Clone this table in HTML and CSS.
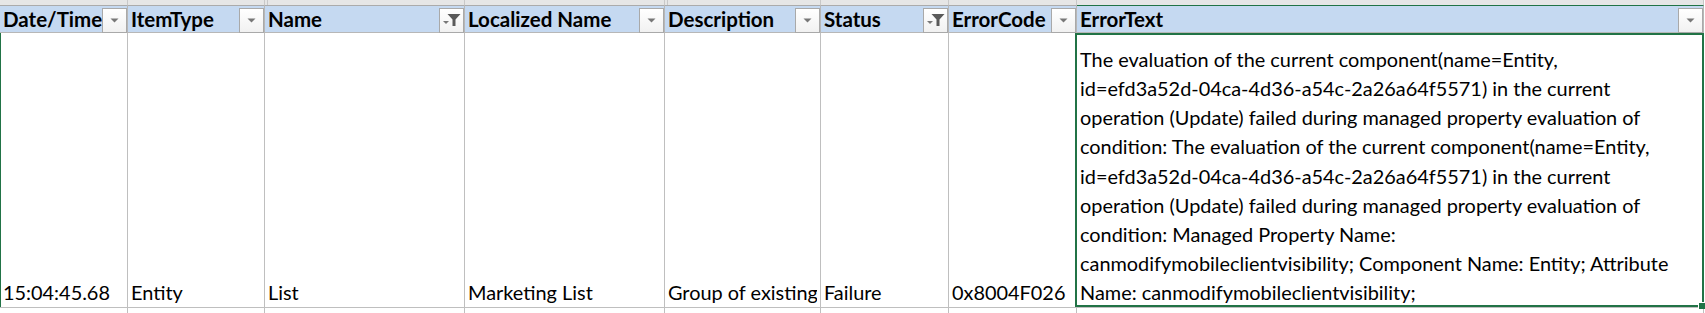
FILE: index.html
```html
<!DOCTYPE html>
<html lang="en">
<head>
<meta charset="utf-8">
<title>Sheet</title>
<link rel="stylesheet" href="styles.css">
</head>
<body>
<div class="sheet">
  <div class="ch"></div>
  <div class="ch"></div>
  <div class="ch ch-hid"></div>
  <div class="ch"></div>
  <div class="ch ch-hid"></div>
  <div class="ch"></div>
  <div class="ch"></div>
  <div class="ch ch-sel"></div>

  <div class="hd"><span class="hd-label">Date/Time</span><span class="dd"><svg viewBox="0 0 23 23" width="23" height="23"><path class="tri" d="M7.5 9.5H15.5L11.5 13.5Z"/></svg></span></div>
  <div class="hd"><span class="hd-label">ItemType</span><span class="dd"><svg viewBox="0 0 23 23" width="23" height="23"><path class="tri" d="M7.5 9.5H15.5L11.5 13.5Z"/></svg></span></div>
  <div class="hd"><span class="hd-label">Name</span><span class="dd"><svg viewBox="0 0 23 23" width="23" height="23"><path class="funnel" d="M7.5 5H20.5L15.5 10.5V17H12.5V10.5Z"/><path class="tri" d="M3 12H9L6 15Z"/></svg></span></div>
  <div class="hd"><span class="hd-label">Localized Name</span><span class="dd"><svg viewBox="0 0 23 23" width="23" height="23"><path class="tri" d="M7.5 9.5H15.5L11.5 13.5Z"/></svg></span></div>
  <div class="hd"><span class="hd-label">Description</span><span class="dd"><svg viewBox="0 0 23 23" width="23" height="23"><path class="tri" d="M7.5 9.5H15.5L11.5 13.5Z"/></svg></span></div>
  <div class="hd"><span class="hd-label">Status</span><span class="dd"><svg viewBox="0 0 23 23" width="23" height="23"><path class="funnel" d="M7.5 5H20.5L15.5 10.5V17H12.5V10.5Z"/><path class="tri" d="M3 12H9L6 15Z"/></svg></span></div>
  <div class="hd"><span class="hd-label">ErrorCode</span><span class="dd"><svg viewBox="0 0 23 23" width="23" height="23"><path class="tri" d="M7.5 9.5H15.5L11.5 13.5Z"/></svg></span></div>
  <div class="hd hd-last"><span class="hd-label">ErrorText</span><span class="dd"><svg viewBox="0 0 23 23" width="23" height="23"><path class="tri" d="M7.5 9.5H15.5L11.5 13.5Z"/></svg></span></div>

  <div class="td td-first">15:04:45.68</div>
  <div class="td">Entity</div>
  <div class="td">List</div>
  <div class="td">Marketing List</div>
  <div class="td"><span class="clip">Group of existing</span></div>
  <div class="td">Failure</div>
  <div class="td">0x8004F026</div>
  <div class="td td-sel"><span class="wrap">The evaluation of the current component(name=Entity,<br>id=efd3a52d-04ca-4d36-a54c-2a26a64f5571) in the current<br>operation (Update) failed during managed property evaluation of<br>condition: The evaluation of the current component(name=Entity,<br>id=efd3a52d-04ca-4d36-a54c-2a26a64f5571) in the current<br>operation (Update) failed during managed property evaluation of<br>condition: Managed Property Name:<br>canmodifymobileclientvisibility; Component Name: Entity; Attribute<br>Name: canmodifymobileclientvisibility;</span></div>

  <div class="ft"></div>
  <div class="ft"></div>
  <div class="ft"></div>
  <div class="ft"></div>
  <div class="ft"></div>
  <div class="ft"></div>
  <div class="ft"></div>
  <div class="ft"></div>
</div>
</body>
</html>
```
FILE: styles.css
```css
* { box-sizing: border-box; }
html, body { margin: 0; padding: 0; }
body {
  font-family: Lato, "Noto Sans", sans-serif;
  font-size: 19.9px;
  color: #000;
  background: #fff;
  overflow: hidden;
}
.sheet {
  display: grid;
  grid-template-columns: 128px 137px 200px 200px 156px 128px 128px 627px;
  grid-template-rows: 6px 27px 275px 1fr;
  width: 1704px;
  height: 313px;
}
.ch {
  background: #e6e6e6;
  border-right: 1px solid #c8c8c8;
  border-bottom: 1px solid #ababab;
}
.ch-hid {
  background: linear-gradient(to right, transparent 2px, #c8c8c8 2px, #c8c8c8 3px, transparent 3px), #e6e6e6;
}
.ch-sel { border-bottom-color: #217346; }

.hd {
  display: flex;
  align-items: flex-start;
  min-width: 0;
  background: #c5d9f1;
  border-right: 1px solid #b7b7b7;
  border-bottom: 1px solid #b7b7b7;
  padding-left: 3px;
  line-height: 26px;
  font-size: 20.5px;
  font-weight: 700;
}
.hd-label {
  flex: 1;
  min-width: 0;
  white-space: nowrap;
  overflow: hidden;
}
.dd {
  flex: none;
  display: flex;
  width: 25px;
  height: 25px;
  margin-top: 2px;
  border: 1px solid #a9a9a9;
  background: linear-gradient(#ffffff, #f1f1f1);
}
.dd svg { display: block; }
.tri { fill: #777; }
.funnel { fill: #5a5a5a; }

.td {
  display: flex;
  align-items: flex-end;
  min-width: 0;
  padding: 0 3px;
  border-right: 1px solid #bfbfbf;
  border-bottom: 1px solid #bfbfbf;
  line-height: 29.1px;
  white-space: nowrap;
  overflow: hidden;
}
.clip {
  display: block;
  min-width: 0;
  overflow: hidden;
}
.td-first { box-shadow: inset 1px 0 0 #217346; }
.td-sel {
  position: relative;
  overflow: visible;
}
.td-sel::after {
  content: "";
  position: absolute;
  left: -2px;
  top: 0;
  right: -1px;
  bottom: 0;
  border: 2px solid #217346;
}
.td-sel::before {
  content: "";
  position: absolute;
  right: -2px;
  bottom: -2px;
  width: 6px;
  height: 6px;
  background: #217346;
  border-left: 1px solid #fff;
  border-top: 1px solid #fff;
  z-index: 1;
}
.wrap { display: block; }
.ft { border-right: 1px solid #bfbfbf; }
```
